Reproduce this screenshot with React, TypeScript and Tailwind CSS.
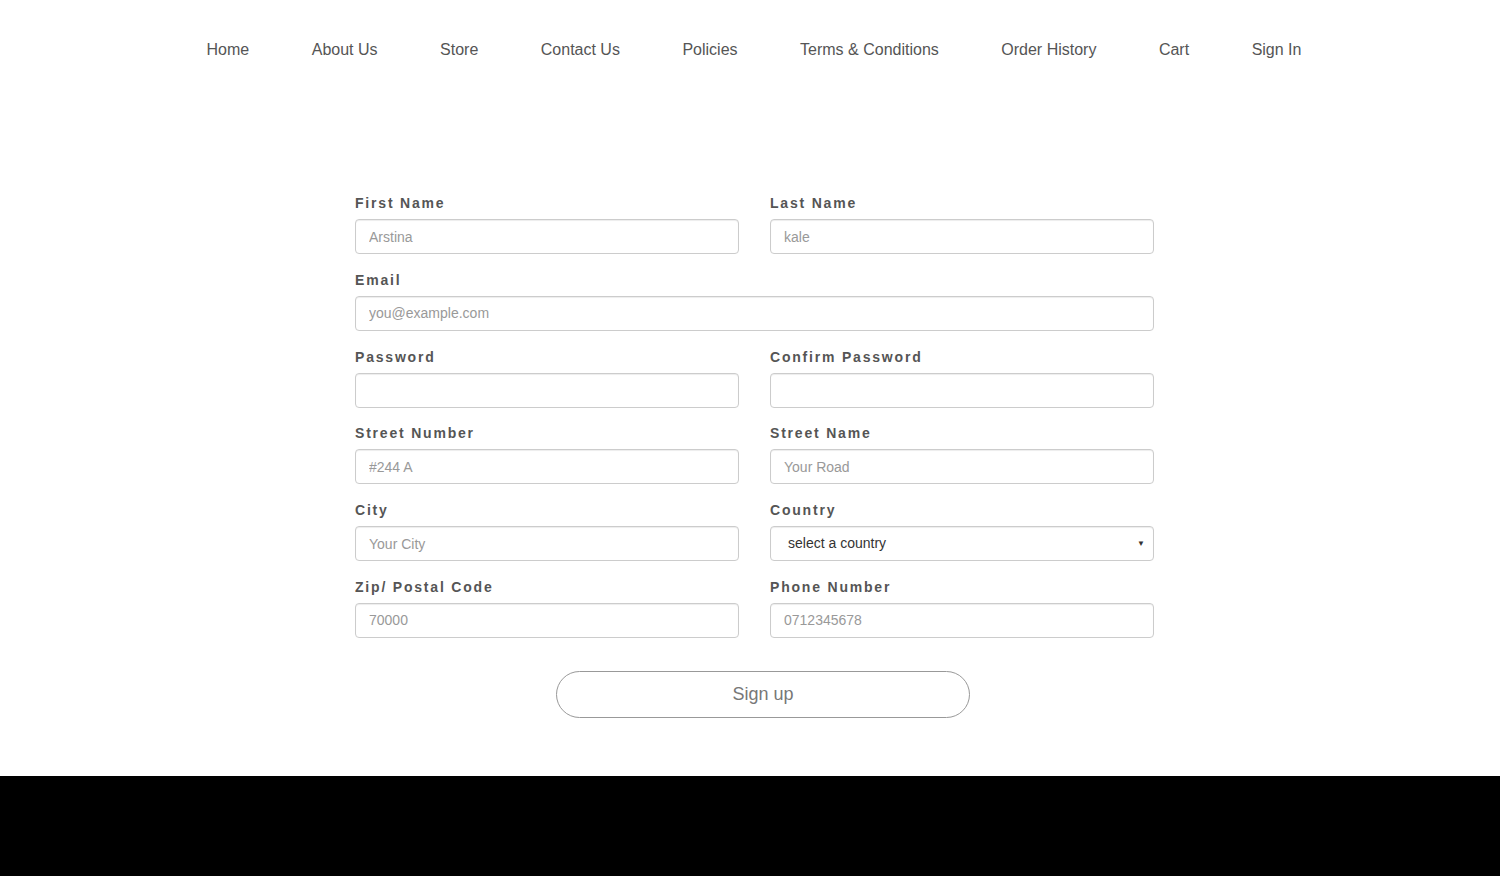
import React from "react";

const nav = ["Home", "About Us", "Store", "Contact Us", "Policies", "Terms & Conditions", "Order History", "Cart", "Sign In"];

function Field({ label, placeholder, type = "text" }: { label: string; placeholder?: string; type?: string }) {
  return (
    <div className="flex flex-col">
      <label className="h-[20px] leading-[20px] mb-[6px] text-[14px] font-bold tracking-[1.8px] text-[#555]">{label}</label>
      <input
        type={type}
        placeholder={placeholder}
        className="h-[35px] w-full rounded-[4px] border border-[#ccc] bg-white px-[13px] text-[14px] text-[#555] placeholder:text-[#999] outline-none shadow-[inset_0_1px_1px_rgba(0,0,0,0.075)]"
      />
    </div>
  );
}

export default function App() {
  return (
    <div className="min-h-[876px] flex flex-col bg-white" style={{ fontFamily: '"Liberation Sans", Arial, sans-serif' }}>
      <nav className="flex justify-center pl-[8px] pt-[39px] gap-[62.5px] text-[16px] text-[#555] leading-[22px]">
        {nav.map((n) => (
          <a key={n} className="whitespace-nowrap">{n}</a>
        ))}
      </nav>
      <div className="flex justify-center pl-[9px] pt-[132px]">
        <form className="w-[799px] flex flex-col">
          <div className="grid grid-cols-2 gap-x-[31px] gap-y-[15.8px]">
            <Field label="First Name" placeholder="Arstina" />
            <Field label="Last Name" placeholder="kale" />
            <div className="col-span-2">
              <Field label="Email" placeholder="you@example.com" />
            </div>
            <Field label="Password" type="password" />
            <Field label="Confirm Password" type="password" />
            <Field label="Street Number" placeholder="#244 A" />
            <Field label="Street Name" placeholder="Your Road" />
            <Field label="City" placeholder="Your City" />
            <div className="flex flex-col">
              <label className="h-[20px] leading-[20px] mb-[6px] text-[14px] font-bold tracking-[1.8px] text-[#555]">Country</label>
              <div className="relative h-[35px] w-full rounded-[4px] border border-[#ccc] bg-white flex items-center pl-[17px] text-[14px] text-[#333] shadow-[inset_0_1px_1px_rgba(0,0,0,0.075)]">
                select a country
                <span className="absolute right-[8px] top-[11px] text-[8px] text-[#333]">▼</span>
              </div>
            </div>
            <Field label="Zip/ Postal Code" placeholder="70000" />
            <Field label="Phone Number" placeholder="0712345678" />
          </div>
          <div className="flex pt-[33px] pl-[201px]">
            <button type="button" className="h-[47px] w-[414px] rounded-[24px] border border-[#999] bg-white text-[18px] text-[#777]">
              Sign up
            </button>
          </div>
        </form>
      </div>
      <div className="mt-[58px] h-[100px] bg-black" />
    </div>
  );
}
